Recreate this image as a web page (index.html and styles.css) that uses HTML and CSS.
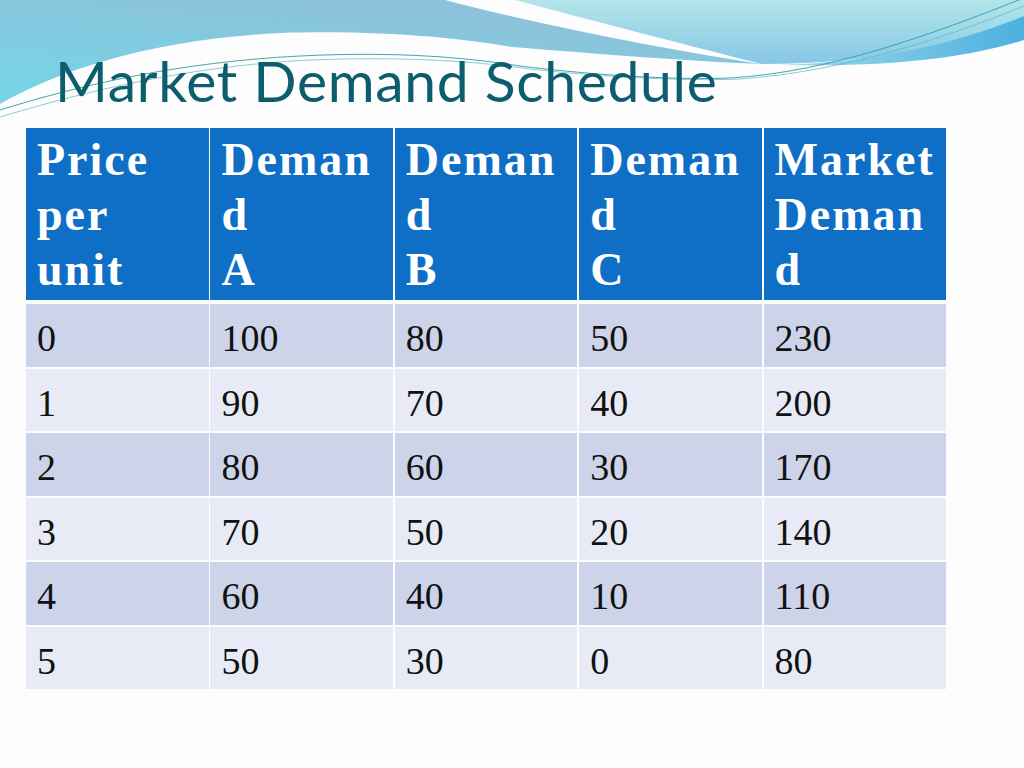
FILE: index.html
```html
<!DOCTYPE html>
<html>
<head>
<meta charset="utf-8">
<title>Market Demand Schedule</title>
<link rel="stylesheet" href="styles.css">
</head>
<body>
<div class="slide">
  <svg class="wave" width="1024" height="130" viewBox="0 0 1024 130">
    <defs>
      <linearGradient id="gA" x1="0.7" y1="0" x2="0.05" y2="1">
        <stop offset="0" stop-color="#90bfd9"/>
        <stop offset="1" stop-color="#74d6e6"/>
      </linearGradient>
      <linearGradient id="gB" x1="0" y1="0" x2="0" y2="1">
        <stop offset="0" stop-color="#b3e6ea"/>
        <stop offset="1" stop-color="#86c7e7"/>
      </linearGradient>
      <linearGradient id="gC" x1="0" y1="0" x2="1" y2="0">
        <stop offset="0" stop-color="#a0d8ea"/>
        <stop offset="1" stop-color="#4bb1df"/>
      </linearGradient>
    </defs>
    <path d="M0,0 H445 C540,25 680,52 762,64 C700,62 600,54 512,47 C460,38 380,30 280,33 C150,40 60,70 0,104 Z" fill="url(#gA)"/>
    <path d="M515,0 H1024 V16 C970,42 880,64 762,64 C690,46 590,20 515,0 Z" fill="url(#gB)"/>
    <path d="M780,65 C880,62 960,42 1024,16 V40 C960,60 880,67 780,65 Z" fill="url(#gC)"/>
    <path d="M0,110 C80,85 180,62 300,56 C400,51 470,58 520,66 C600,76 680,80 730,78 C830,72 930,35 1024,-2" fill="none" stroke="#2f9ea2" stroke-width="0.9"/>
    <path d="M0,117 C90,90 190,66 310,60 C410,56 480,62 530,69 C610,78 690,81 740,79 C840,72 940,40 1024,6" fill="none" stroke="#5cb8c0" stroke-width="0.7"/>
  </svg>
  <h1 class="title">Market Demand Schedule</h1>
  <div class="grid">
    <div class="cell head">Price<br>per<br>unit</div>
    <div class="cell head">Deman<br>d<br>A</div>
    <div class="cell head">Deman<br>d<br>B</div>
    <div class="cell head">Deman<br>d<br>C</div>
    <div class="cell head">Market<br>Deman<br>d</div>

    <div class="cell odd">0</div><div class="cell odd">100</div><div class="cell odd">80</div><div class="cell odd">50</div><div class="cell odd">230</div>
    <div class="cell even">1</div><div class="cell even">90</div><div class="cell even">70</div><div class="cell even">40</div><div class="cell even">200</div>
    <div class="cell odd">2</div><div class="cell odd">80</div><div class="cell odd">60</div><div class="cell odd">30</div><div class="cell odd">170</div>
    <div class="cell even">3</div><div class="cell even">70</div><div class="cell even">50</div><div class="cell even">20</div><div class="cell even">140</div>
    <div class="cell odd">4</div><div class="cell odd">60</div><div class="cell odd">40</div><div class="cell odd">10</div><div class="cell odd">110</div>
    <div class="cell even">5</div><div class="cell even">50</div><div class="cell even">30</div><div class="cell even">0</div><div class="cell even">80</div>
  </div>
</div>
</body>
</html>
```
FILE: styles.css
```css
html, body {
  margin: 0;
  padding: 0;
  background: #fdfdfd;
}
.slide {
  position: relative;
  width: 1024px;
  height: 768px;
  overflow: hidden;
  background: #fdfdfd;
}
.wave {
  position: absolute;
  top: 0;
  left: 0;
  z-index: 0;
}
.title {
  position: relative;
  z-index: 1;
  margin: 0;
  height: 128px;
  box-sizing: border-box;
  padding: 52px 0 0 55px;
  font-family: Lato, "Liberation Sans", sans-serif;
  font-weight: 400;
  font-size: 57px;
  line-height: 57px;
  letter-spacing: 0.7px;
  color: #0c5d6e;
}
.grid {
  position: relative;
  z-index: 1;
  margin-left: 26px;
  display: grid;
  grid-template-columns: repeat(5, 182.6px);
  grid-template-rows: 174px repeat(6, 62.5px);
  column-gap: 1.8px;
  row-gap: 2px;
}
.cell {
  box-sizing: border-box;
  padding: 12px 11px 0;
  font-family: "Liberation Serif", serif;
  font-size: 38px;
  line-height: 45px;
  color: #111;
}
.head {
  margin-bottom: 2px;
  padding: 4px 11px 0;
  background: #0f6fc6;
  color: #fff;
  font-weight: 700;
  font-size: 46px;
  line-height: 55px;
  letter-spacing: 2px;
}
.odd {
  background: #cdd4e9;
}
.even {
  background: #e8ebf5;
}
```
